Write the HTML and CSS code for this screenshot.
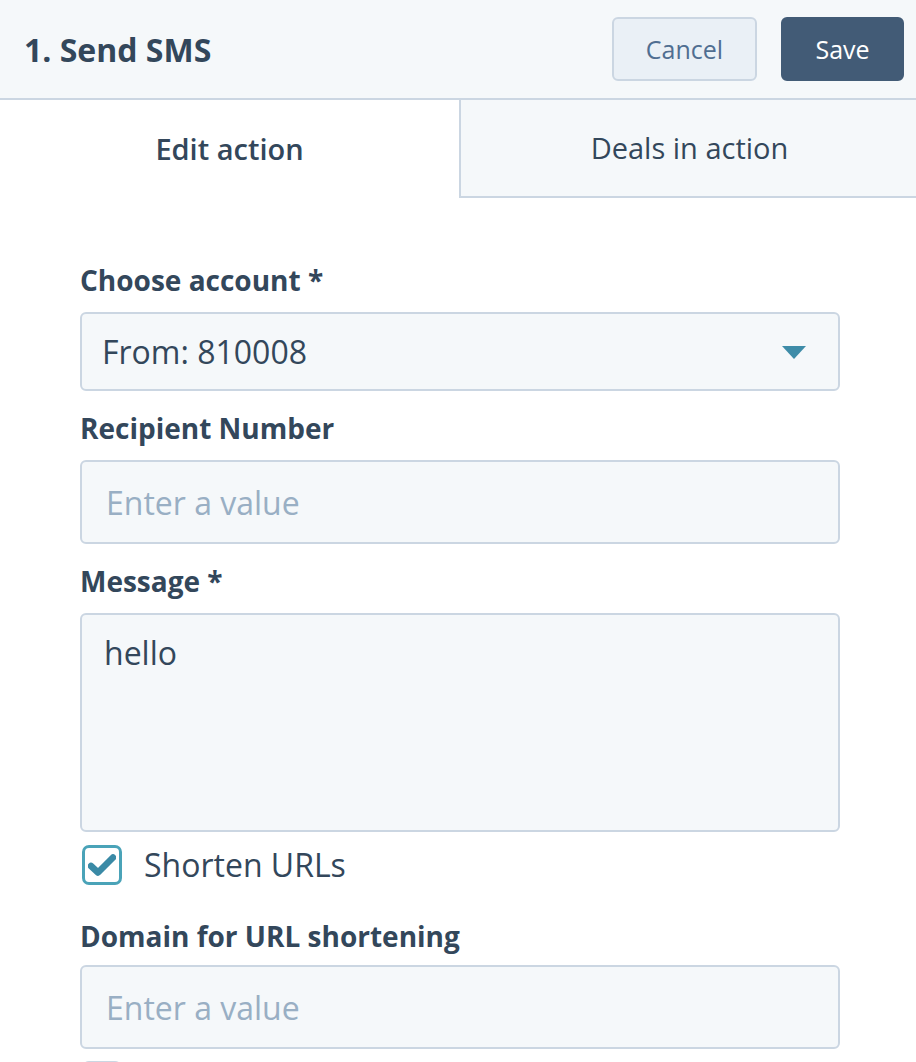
FILE: index.html
```html
<!DOCTYPE html>
<html lang="en">
<head>
<meta charset="utf-8">
<title>Send SMS</title>
<link rel="stylesheet" href="styles.css">
</head>
<body>
<div class="panel">
  <header class="header">
    <h1 class="title">1. Send SMS</h1>
    <div class="actions">
      <button class="btn btn-secondary" type="button">Cancel</button>
      <button class="btn btn-primary" type="button">Save</button>
    </div>
  </header>
  <nav class="tabs">
    <div class="tab tab-active">Edit action</div>
    <div class="tab tab-inactive">Deals in action</div>
  </nav>
  <form class="form">
    <div class="field field-first">
      <label class="label">Choose account *</label>
      <div class="select">
        <span class="select-value">From: 810008</span>
        <svg class="caret" width="24" height="13" viewBox="0 0 24 13"><path d="M0 0 H24 L12 13 Z" fill="#3e8ca8"/></svg>
      </div>
    </div>
    <div class="field">
      <label class="label">Recipient Number</label>
      <div class="input"><span class="placeholder">Enter a value</span></div>
    </div>
    <div class="field">
      <label class="label">Message *</label>
      <div class="textarea">hello</div>
    </div>
    <div class="checkbox-row">
      <span class="checkbox">
        <svg width="28" height="22" viewBox="0 0 28 22"><path d="M3 12 L10 18.5 L25 3.5" fill="none" stroke="#3a8aa6" stroke-width="6.5" stroke-linecap="round" stroke-linejoin="round"/></svg>
      </span>
      <span class="checkbox-label">Shorten URLs</span>
    </div>
    <div class="field field-after-check">
      <label class="label label-tight">Domain for URL shortening</label>
      <div class="input"><span class="placeholder">Enter a value</span></div>
    </div>
    <div class="checkbox-row checkbox-row-next">
      <span class="checkbox checkbox-empty"></span>
    </div>
  </form>
</div>
</body>
</html>
```
FILE: styles.css
```css
* { box-sizing: border-box; }
html, body {
  margin: 0;
  padding: 0;
  background: #ffffff;
}
body {
  font-family: "Open Sans", "Noto Sans", sans-serif;
  color: #33475b;
  overflow: hidden;
  height: 1062px;
}
.panel {
  width: 916px;
}
.header {
  height: 100px;
  background: #f5f8fa;
  border-bottom: 2px solid #cbd6e2;
  display: flex;
  align-items: center;
  justify-content: space-between;
  padding: 0 12px 0 24px;
}
.title {
  margin: 0;
  font-size: 32px;
  font-weight: 700;
  color: #33475b;
}
.actions {
  display: flex;
  gap: 24px;
}
.btn {
  height: 64px;
  border-radius: 6px;
  font-family: inherit;
  font-size: 25px;
  font-weight: 400;
  padding: 0;
}
.btn-secondary {
  width: 145px;
  background: #eaf0f6;
  border: 2px solid #cbd6e2;
  color: #506e91;
}
.btn-primary {
  width: 123px;
  background: #425b76;
  border: 2px solid #425b76;
  color: #ffffff;
}
.tabs {
  display: grid;
  grid-template-columns: 459px 1fr;
  height: 98px;
}
.tab {
  display: flex;
  align-items: center;
  justify-content: center;
  font-size: 29px;
  color: #33475b;
  padding-bottom: 2px;
}
.tab-active {
  background: #ffffff;
  font-weight: 600;
}
.tab-inactive {
  background: #f5f8fa;
  border-left: 2px solid #cbd6e2;
  border-bottom: 2px solid #cbd6e2;
  padding-left: 2px;
}
.form {
  padding: 66px 76px 0 80px;
}
.field {
  display: flex;
  flex-direction: column;
  margin-top: 21px;
}
.field-first { margin-top: 0; }
.field-after-check { margin-top: 35px; }
.label {
  font-size: 28px;
  font-weight: 700;
  line-height: 32px;
  margin-bottom: 16px;
  color: #33475b;
}
.label-tight { margin-bottom: 13px; }
.select, .input, .textarea {
  background: #f5f8fa;
  border: 2px solid #cbd6e2;
  border-radius: 6px;
  font-size: 32px;
  color: #33475b;
}
.select {
  height: 79px;
  display: flex;
  align-items: center;
  justify-content: space-between;
  padding: 0 32px 0 20px;
}
.caret { display: block; margin-top: 2px; }
.input {
  height: 84px;
  display: flex;
  align-items: center;
  padding: 0 24px;
}
.placeholder {
  color: #99afc4;
}
.textarea {
  height: 219px;
  padding: 18px 22px;
  line-height: 40px;
}
.checkbox-row {
  display: flex;
  align-items: center;
  gap: 22px;
  margin-top: 13px;
  padding-left: 2px;
  height: 40px;
}
.checkbox-row-next { margin-top: 12px; }
.checkbox {
  width: 40px;
  height: 40px;
  border: 3px solid #4aa3b8;
  border-radius: 7px;
  background: #ffffff;
  display: flex;
  align-items: center;
  justify-content: center;
  flex: none;
}
.checkbox-empty {
  border-color: #cbd6e2;
  background: #f5f8fa;
}
.checkbox-label {
  font-size: 32px;
  line-height: 40px;
  color: #33475b;
}
```
